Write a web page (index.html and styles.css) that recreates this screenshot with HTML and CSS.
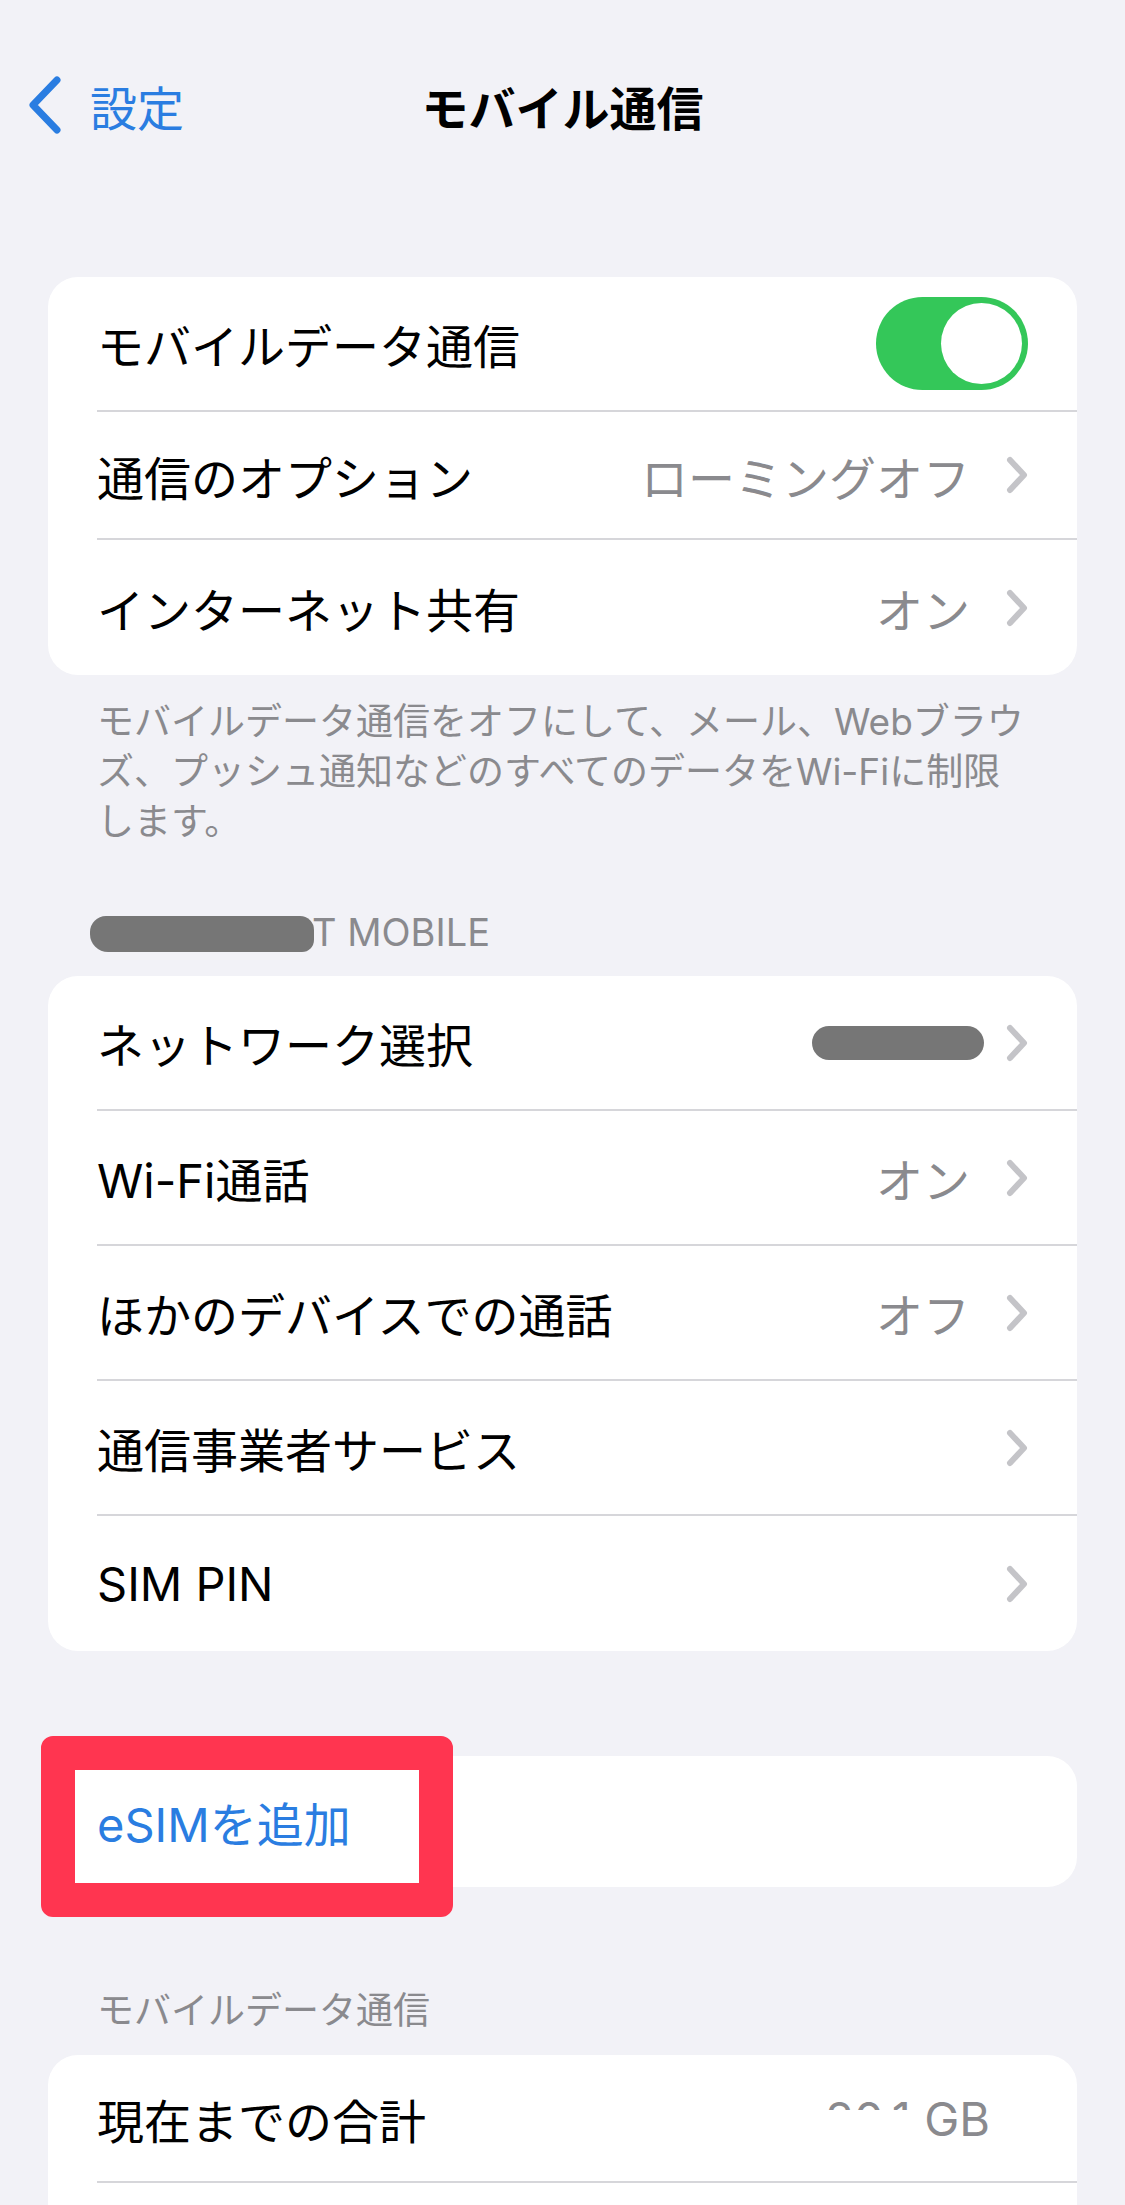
FILE: index.html
```html
<!DOCTYPE html>
<html lang="ja">
<head>
    <meta charset="UTF-8">
    <meta name="viewport" content="width=device-width, initial-scale=1.0">
    <title>モバイル通信</title>
    <link rel="stylesheet" href="styles.css">
</head>
<body>
    <header class="navbar">
        <a class="back" href="#">
            <svg viewBox="0 0 34 58"><path d="M29 4 L5 29 L29 54"/></svg>
            <span>設定</span>
        </a>
        <h1 class="title">モバイル通信</h1>
        <div></div>
    </header>

    <section class="group first">
        <div class="row">
            <span class="label">モバイルデータ通信</span>
            <span class="toggle"><span class="knob"></span></span>
        </div>
        <div class="row tight">
            <span class="label">通信のオプション</span>
            <span class="value">ローミングオフ</span>
            <svg class="chev" viewBox="0 0 22 38"><path d="M4 4 L18 19 L4 34"/></svg>
        </div>
        <div class="row">
            <span class="label">インターネット共有</span>
            <span class="value">オン</span>
            <svg class="chev" viewBox="0 0 22 38"><path d="M4 4 L18 19 L4 34"/></svg>
        </div>
    </section>

    <p class="footer">
        モバイルデータ通信をオフにして、メール、Webブラウ<br>
        ズ、プッシュ通知などのすべてのデータをWi-Fiに制限<br>
        します。
    </p>

    <h2 class="section-header"><span class="redact"></span>T MOBILE</h2>

    <section class="group">
        <div class="row">
            <span class="label">ネットワーク選択</span>
            <span class="redact pill"></span>
            <svg class="chev" viewBox="0 0 22 38"><path d="M4 4 L18 19 L4 34"/></svg>
        </div>
        <div class="row">
            <span class="label">Wi-Fi通話</span>
            <span class="value">オン</span>
            <svg class="chev" viewBox="0 0 22 38"><path d="M4 4 L18 19 L4 34"/></svg>
        </div>
        <div class="row">
            <span class="label">ほかのデバイスでの通話</span>
            <span class="value">オフ</span>
            <svg class="chev" viewBox="0 0 22 38"><path d="M4 4 L18 19 L4 34"/></svg>
        </div>
        <div class="row">
            <span class="label">通信事業者サービス</span>
            <svg class="chev" viewBox="0 0 22 38"><path d="M4 4 L18 19 L4 34"/></svg>
        </div>
        <div class="row">
            <span class="label">SIM PIN</span>
            <svg class="chev" viewBox="0 0 22 38"><path d="M4 4 L18 19 L4 34"/></svg>
        </div>
    </section>

    <section class="group add">
        <div class="highlight"></div>
        <div class="row esim">
            <span class="label link">eSIMを追加</span>
        </div>
    </section>

    <h2 class="section-header second">モバイルデータ通信</h2>

    <section class="group">
        <div class="row usage">
            <span class="label">現在までの合計</span>
            <span class="value plain"><span class="mask">20.1</span> GB</span>
        </div>
        <div class="row"></div>
    </section>
</body>
</html>
```

FILE: styles.css
```css
body {
    margin: 0;
    background-color: #f2f2f7;
    font-family: Inter, "Noto Sans CJK JP", sans-serif;
    color: #000;
}

/* nav */
.navbar {
    display: grid;
    grid-template-columns: 1fr auto 1fr;
    align-items: center;
    height: 210px;
}
.back {
    display: flex;
    align-items: center;
    gap: 28px;
    padding-left: 28px;
    color: #2a7de1;
    text-decoration: none;
    font-size: 47px;
}
.back svg {
    width: 34px;
    height: 58px;
    fill: none;
    stroke: #2a7de1;
    stroke-width: 7;
    stroke-linecap: round;
    stroke-linejoin: round;
}
.title {
    margin: 0;
    font-size: 47px;
    font-weight: 700;
}

/* grouped list */
.group {
    margin: 0 48px;
    background-color: #fff;
    border-radius: 30px;
}
.group.first {
    margin-top: 67px;
}
.group.add {
    position: relative;
    margin-top: 105px;
}
.row {
    display: flex;
    align-items: center;
    box-sizing: border-box;
    height: 135px;
    margin-left: 49px;
    padding-right: 49px;
    border-bottom: 2px solid #d6d6da;
    font-size: 47px;
}
.row:last-child {
    border-bottom: none;
}
.row.tight {
    height: 128px;
}
.row.esim {
    height: 131px;
}
.row.usage {
    height: 128px;
}
.label {
    flex: 1;
}
.link {
    color: #2a7de1;
}
.value {
    color: #8a8a8e;
    margin-right: 36px;
}
.value.plain {
    margin-right: 38px;
    line-height: 1;
}
.mask {
    display: inline-block;
    position: relative;
    line-height: 1;
}
.mask::after {
    content: "";
    position: absolute;
    left: -4px;
    right: -6px;
    top: 15px;
    bottom: -8px;
    background-color: #fff;
}
.chev {
    width: 22px;
    height: 38px;
    fill: none;
    stroke: #c4c4c8;
    stroke-width: 6;
    stroke-linecap: round;
    stroke-linejoin: round;
}

/* toggle */
.toggle {
    display: flex;
    justify-content: flex-end;
    align-items: center;
    box-sizing: border-box;
    width: 152px;
    height: 93px;
    padding: 0 6px;
    border-radius: 47px;
    background-color: #34c759;
}
.knob {
    width: 81px;
    height: 81px;
    border-radius: 50%;
    background-color: #fff;
}

/* text outside cards */
.footer {
    margin: 0;
    padding: 22px 40px 0 97px;
    font-size: 37px;
    line-height: 50px;
    color: #8a8a8e;
    white-space: nowrap;
}
.section-header {
    margin: 60px 0 19px;
    padding-left: 97px;
    font-size: 38px;
    font-weight: 400;
    line-height: 50px;
    color: #8a8a8e;
}
.section-header.second {
    margin-top: 99px;
    font-size: 37px;
}

/* blurred / hidden bits */
.redact {
    display: inline-block;
    vertical-align: -6px;
    width: 224px;
    height: 36px;
    margin-left: -7px;
    margin-right: -2px;
    border-radius: 16px 14px 12px 18px;
    background-color: #767676;
}
.redact.pill {
    width: 172px;
    height: 34px;
    margin: 0 22px 0 0;
    border-radius: 17px;
}

/* red annotation frame */
.highlight {
    position: absolute;
    left: -7px;
    top: -20px;
    box-sizing: border-box;
    width: 412px;
    height: 181px;
    border: 34px solid #ff3550;
    border-radius: 12px;
}
```
